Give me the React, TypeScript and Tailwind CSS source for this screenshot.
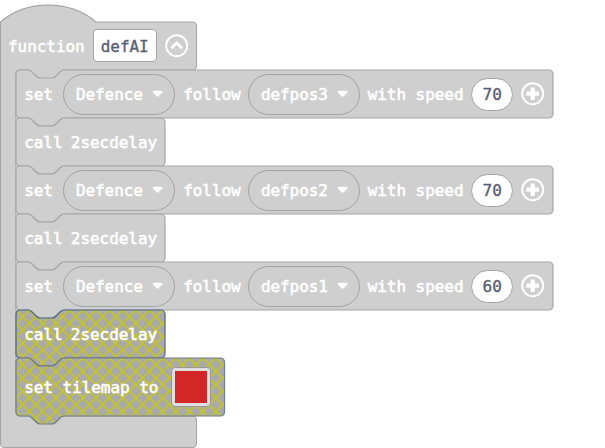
import React from "react";

const NOTCH =
  "c2 0 3 1 4 2l4 4c1 1 2 2 4 2h12c2 0 3 -1 4 -2l4 -4c1 -1 2 -2 4 -2";
const NOTCH_BACK =
  "c-2 0 -3 1 -4 2l-4 4c-1 1 -2 2 -4 2h-12c-2 0 -3 -1 -4 -2l-4 -4c-1 -1 -2 -2 -4 -2";

function blockPath(w: number, h: number) {
  return `M0 4a4 4 0 0 1 4 -4h8${NOTCH}H${w - 4}a4 4 0 0 1 4 4V${h - 4}a4 4 0 0 1 -4 4H48${NOTCH_BACK}H4a4 4 0 0 1 -4 -4z`;
}

type BlockProps = {
  width: number;
  height: number;
  disabled?: boolean;
  stroke?: string;
  children: React.ReactNode;
};

function Block({ width, height, disabled, stroke = "#a6a6a6", children }: BlockProps) {
  return (
    <div className="relative flex shrink-0 items-center pl-[8.5px]" style={{ width, height }}>
      <svg
        className="absolute top-0 left-0 overflow-visible"
        width={width}
        height={height}
        fill="none"
      >
        <path
          d={blockPath(width, height)}
          fill={disabled ? "url(#hatch)" : "#cfcfcf"}
          stroke={stroke}
          strokeWidth="1.2"
        />
      </svg>
      {children}
    </div>
  );
}

function Label({ children, className = "" }: { children: React.ReactNode; className?: string }) {
  return (
    <span
      className={`relative top-px shrink-0 whitespace-pre text-white [-webkit-text-stroke:0.55px_white] ${className}`}
    >
      {children}
    </span>
  );
}

function Dropdown({ text }: { text: string }) {
  return (
    <div className="relative flex h-[41px] w-[112px] shrink-0 items-center rounded-full border border-[#a3a3a3] pl-[11.700px]">
      <Label className="w-[76px]">{text}</Label>
      <svg className="shrink-0" width="12" height="8" viewBox="0 0 12 8">
        <path
          d="M1.600 .8H9.600Q11 1 10.200 2.400L6.600 6.300Q5.600 7.100 4.600 6.300L1 2.400Q.2 1 1.600 .8z"
          fill="white"
        />
      </svg>
    </div>
  );
}

function RoundButton({ children }: { children: React.ReactNode }) {
  return (
    <svg className="relative shrink-0" width="24" height="24" viewBox="0 0 24 24" fill="none" stroke="white">
      <circle cx="11.700" cy="11.700" r="10.500" strokeWidth="1.900" />
      {children}
    </svg>
  );
}

function FollowBlock({ target, speed }: { target: string; speed: number }) {
  return (
    <Block width={537} height={48}>
      <Label className="w-[39px]">set</Label>
      <Dropdown text="Defence" />
      <Label className="ml-[8px] w-[65px]">follow</Label>
      <Dropdown text={target} />
      <Label className="ml-[7.5px] w-[103.5px]">with speed</Label>
      <div className="relative flex h-[33px] w-[42px] shrink-0 items-center justify-center rounded-full border border-[#a3a3a3] bg-white text-[#575e75] [-webkit-text-stroke:0.35px_#575e75]">
        <span className="relative top-px">{speed}</span>
      </div>
      <div className="ml-[8px] flex">
        <RoundButton>
          <path d="M11.700 5.400V18M5.400 11.700H18" strokeWidth="4.200" />
        </RoundButton>
      </div>
    </Block>
  );
}

function CallBlock({ disabled }: { disabled?: boolean }) {
  return (
    <Block width={149} height={48} disabled={disabled} stroke={disabled ? "#4a6688" : undefined}>
      <Label className="[word-spacing:-1.3px]">call 2secdelay</Label>
    </Block>
  );
}

export default function App() {
  return (
    <div
      className="relative flex h-[448px] w-[605px] flex-col overflow-hidden bg-white pt-[22px] text-[16px] leading-[20px] tracking-[-0.05px]"
      style={{ fontFamily: '"DejaVu Sans Mono", monospace' }}
    >
      <svg className="absolute top-0 left-0" width="605" height="448" fill="none">
        <defs>
          <pattern
            id="hatch"
            patternUnits="userSpaceOnUse"
            width="10"
            height="10"
            patternTransform="scale(1.3333)"
          >
            <rect width="10" height="10" fill="#aaa" />
            <path d="M-1 -1L11 11M11 -1L-1 11" stroke="#cc0" strokeWidth="1" />
          </pattern>
        </defs>
        <path
          d="M.5 22C26 -.5 70 -.5 96 22H192.500a4 4 0 0 1 4 4V66a4 4 0 0 1 -4 4H63V82H28V70H20a4 4 0 0 0 -4 4V412a4 4 0 0 0 4 4H192.500a4 4 0 0 1 4 4V443.500a4 4 0 0 1 -4 4H4.500a4 4 0 0 1 -4 -4z"
          fill="#cfcfcf"
          stroke="#a6a6a6"
          strokeWidth="1.1"
        />
      </svg>
      <div className="relative flex h-[47.500px] shrink-0 items-center pl-[8px]">
        <Label className="w-[84.500px]">function</Label>
        <div className="flex h-[33px] w-[64.5px] items-center justify-center rounded-[4px] border border-[#a3a3a3] bg-white text-[#575e75] [-webkit-text-stroke:0.35px_#575e75]">
          <span className="relative top-px">defAI</span>
        </div>
        <div className="ml-[7.5px] flex">
          <RoundButton>
            <path d="M6.300 14.300L11.700 8.900L17.100 14.300" strokeWidth="3" />
          </RoundButton>
        </div>
      </div>
      <div className="relative flex flex-col items-start pt-[0.5px] pl-[15.7px]">
        <FollowBlock target="defpos3" speed={70} />
        <CallBlock />
        <FollowBlock target="defpos2" speed={70} />
        <CallBlock />
        <FollowBlock target="defpos1" speed={60} />
        <CallBlock disabled />
        <Block width={208.500} height={58} disabled stroke="#6c7c8c">
          <Label className="w-[146.500px]">set tilemap to</Label>
          <div className="relative h-[40px] w-[40px] rounded-[4px] border border-[#999] bg-[#dedede] p-[3px]">
            <div className="h-full w-full bg-[#d32626]" />
          </div>
        </Block>
      </div>
    </div>
  );
}
